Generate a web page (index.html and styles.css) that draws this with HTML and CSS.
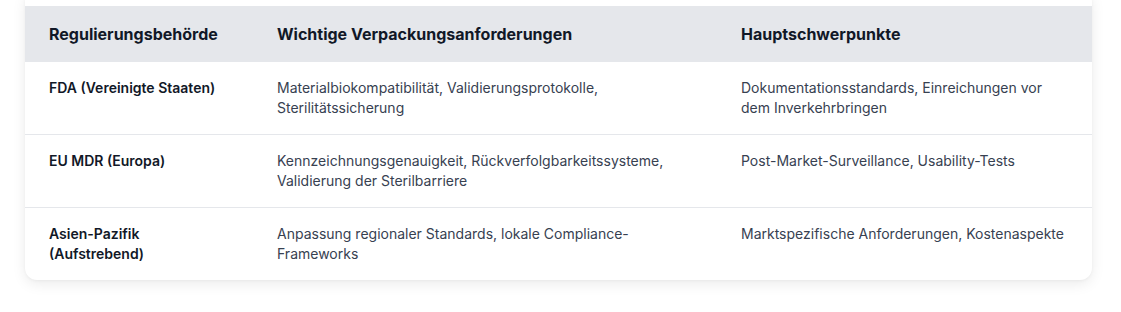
FILE: index.html
```html
<!DOCTYPE html>
<html lang="de">
<head>
<meta charset="utf-8">
<link rel="stylesheet" href="styles.css">
</head>
<body>
<div class="page">
  <div class="card">
    <table class="reg-table">
      <thead>
        <tr>
          <th class="c1">Regulierungsbehörde</th>
          <th class="c2">Wichtige Verpackungsanforderungen</th>
          <th class="c3">Hauptschwerpunkte</th>
        </tr>
      </thead>
      <tbody>
        <tr>
          <td class="name">FDA (Vereinigte Staaten)</td>
          <td>Materialbiokompatibilität, Validierungsprotokolle, Sterilitätssicherung</td>
          <td>Dokumentationsstandards, Einreichungen vor dem Inverkehrbringen</td>
        </tr>
        <tr>
          <td class="name">EU MDR (Europa)</td>
          <td>Kennzeichnungsgenauigkeit, Rückverfolgbarkeitssysteme, Validierung der Sterilbarriere</td>
          <td>Post-Market-Surveillance, Usability-Tests</td>
        </tr>
        <tr>
          <td class="name">Asien-Pazifik (Aufstrebend)</td>
          <td>Anpassung regionaler Standards, lokale Compliance-Frameworks</td>
          <td>Marktspezifische Anforderungen, Kostenaspekte</td>
        </tr>
      </tbody>
    </table>
  </div>
</div>
</body>
</html>
```
FILE: styles.css
```css
* { box-sizing: border-box; }
html, body { margin: 0; padding: 0; background: #ffffff; }
body {
  font-family: Inter, "Noto Sans", sans-serif;
  color: #374151;
  -webkit-font-smoothing: antialiased;
}
.page {
  padding: 0 29px 32px 25px;
}
.card {
  margin-top: -10px;
  padding-top: 16px;
  background: #ffffff;
  border-radius: 12px;
  box-shadow: 0 4px 14px rgba(0, 0, 0, 0.08), 0 1px 3px rgba(0, 0, 0, 0.04);
  overflow: hidden;
}
.reg-table {
  width: 100%;
  border-collapse: collapse;
  table-layout: fixed;
}
.reg-table th {
  background: #e5e7eb;
  color: #111827;
  font-size: 16px;
  font-weight: 700;
  line-height: 24px;
  text-align: left;
  padding: 16px 24px;
}
.reg-table .c1 { width: 228px; }
.reg-table .c2 { width: 464px; }
.reg-table td {
  font-size: 14px;
  line-height: 20px;
  padding: 16px 24px;
  vertical-align: top;
  color: #374151;
  border-top: 1px solid #e5e7eb;
}
.reg-table tbody tr:first-child td { border-top: none; }
.reg-table td.name {
  color: #111827;
  font-weight: 600;
}
```
